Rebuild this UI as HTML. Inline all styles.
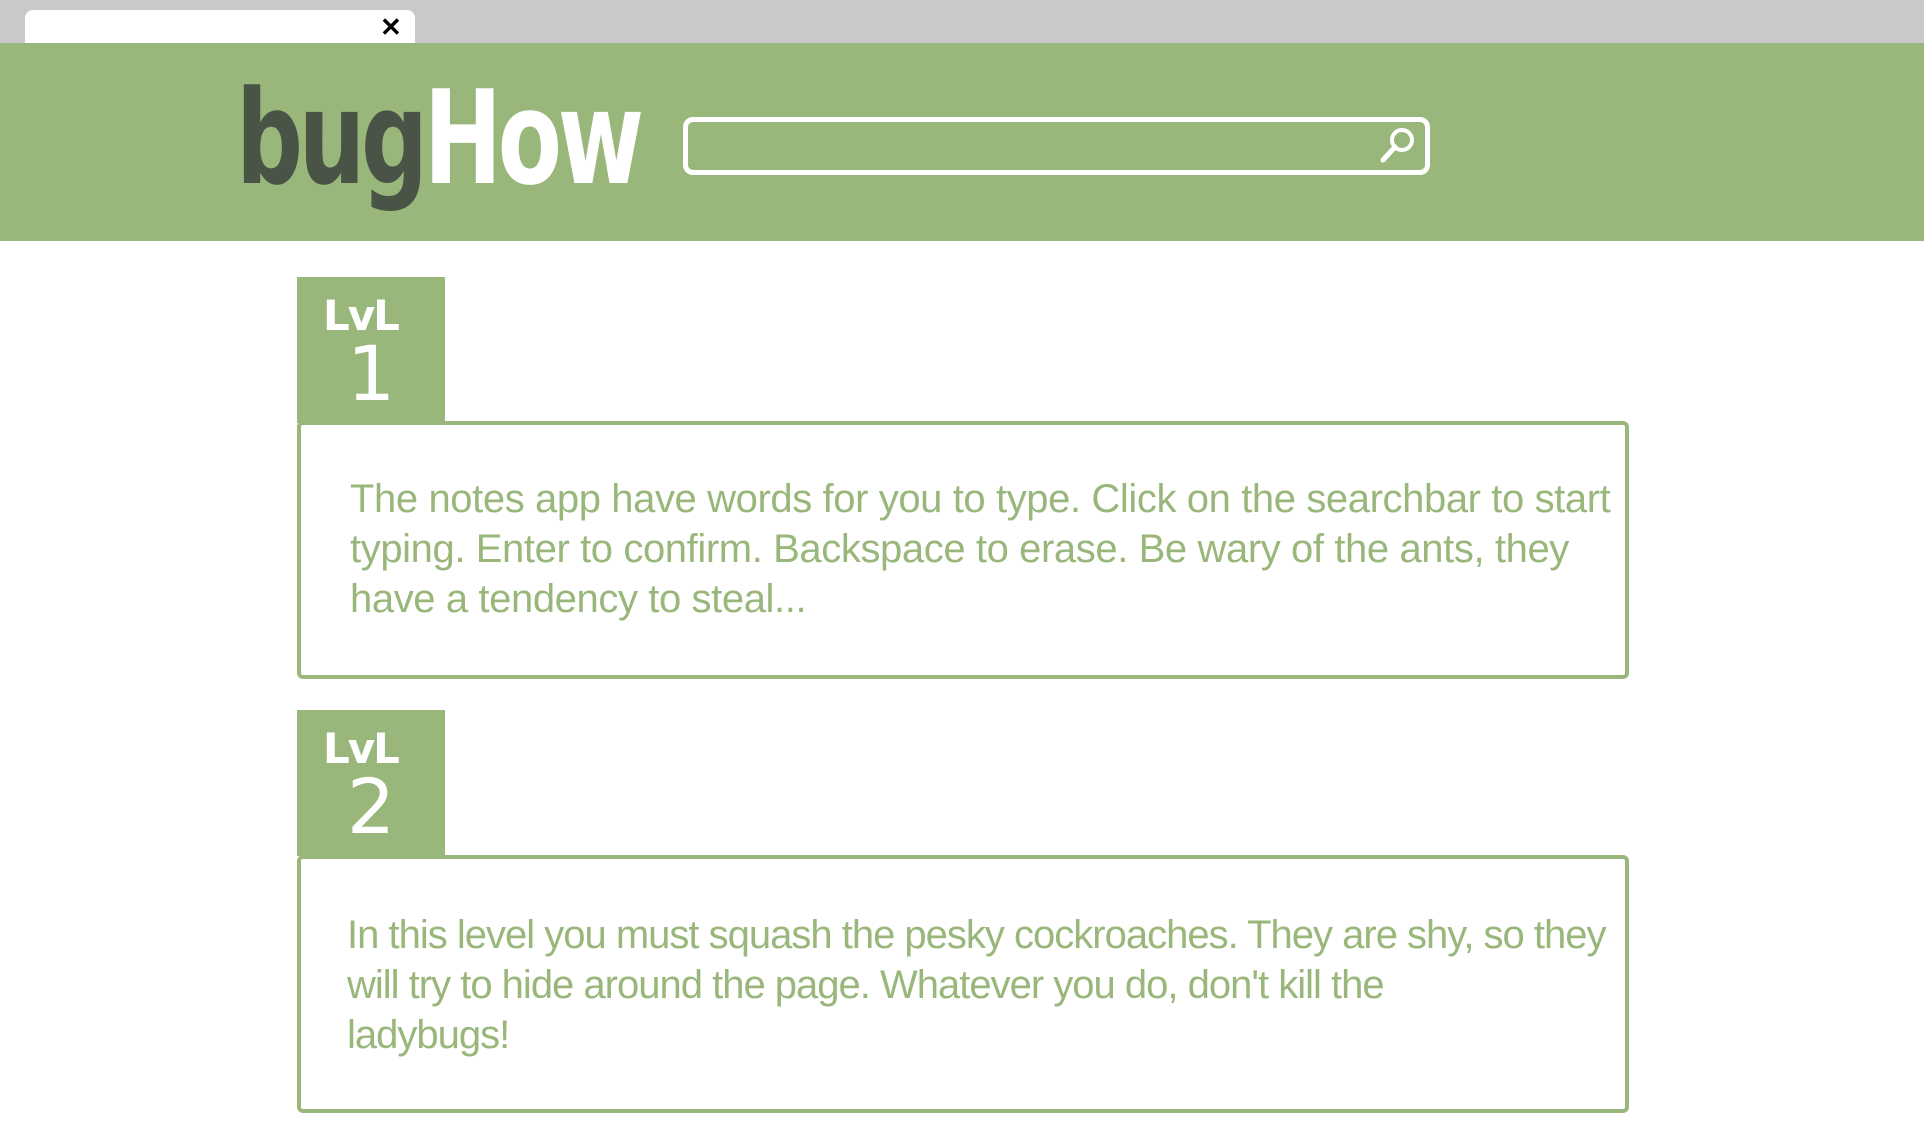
<!DOCTYPE html>
<html><head><style>
html,body{margin:0;padding:0;width:1924px;height:1145px;overflow:hidden;background:#fff;position:relative;font-family:"Liberation Sans",sans-serif}
.tabbar{position:absolute;left:0;top:0;width:1924px;height:43px;background:#c9c9c9}
.tab{position:absolute;left:25px;top:10px;width:390px;height:33px;background:#fff;border-radius:8px 8px 0 0}
.x{position:absolute;left:355px;top:2px;font-size:26px;font-weight:bold;color:#000;line-height:30px}
.header{position:absolute;left:0;top:43px;width:1924px;height:198px;background:#9ab77b}
.logo{position:absolute;left:236px;top:20px;font-size:130px;font-weight:bold;letter-spacing:-6px;line-height:150px;font-family:"DejaVu Sans",sans-serif;transform:scaleX(0.72);transform-origin:0 0}
.logo .b{color:#4a5446}.logo .h{color:#fff}
.search{position:absolute;left:683px;top:74px;width:737px;height:48px;border:5px solid #fff;border-radius:10px}
.lvl{position:absolute;left:297px;width:148px;height:146px;background:#9ab77b;color:#fff;text-align:center;font-family:"DejaVu Sans",sans-serif}
.lvl .l{position:absolute;left:26px;top:14px;font-size:42px;font-weight:bold;letter-spacing:-2px}
.lvl .n{position:absolute;left:0;width:100%;top:52px;font-size:76px;line-height:90px}
.box{position:absolute;left:297px;width:1324px;height:250px;border:4px solid #9ab77b;border-radius:6px}
.txt{position:absolute;color:#9ab77b;font-size:40px;line-height:50px;white-space:nowrap;letter-spacing:-0.4px}
</style></head><body>
<div class="tabbar"><div class="tab"><div class="x">✕</div></div></div>
<div class="header">
<div class="logo"><span class="b">bug</span><span class="h">How</span></div>
<div class="search"></div>
<svg style="position:absolute;left:1370px;top:77px" width="50" height="50" viewBox="0 0 50 50"><circle cx="32" cy="20" r="10" fill="none" stroke="#fff" stroke-width="4"/><line x1="25" y1="27" x2="13" y2="40" stroke="#fff" stroke-width="5" stroke-linecap="round"/></svg>
</div>
<div class="lvl" style="top:277px"><div class="l">LvL</div><div class="n">1</div></div>
<div class="box" style="top:421px"></div>
<div class="txt" style="left:350px;top:474px">The notes app have words for you to type. Click on the searchbar to start<br>typing. Enter to confirm. Backspace to erase. Be wary of the ants, they<br>have a tendency to steal...</div>
<div class="lvl" style="top:710px"><div class="l">LvL</div><div class="n">2</div></div>
<div class="box" style="top:855px"></div>
<div class="txt" style="left:347px;top:910px;letter-spacing:-1px">In this level you must squash the pesky cockroaches. They are shy, so they<br>will try to hide around the page. Whatever you do, don't kill the<br>ladybugs!</div>
</body></html>
